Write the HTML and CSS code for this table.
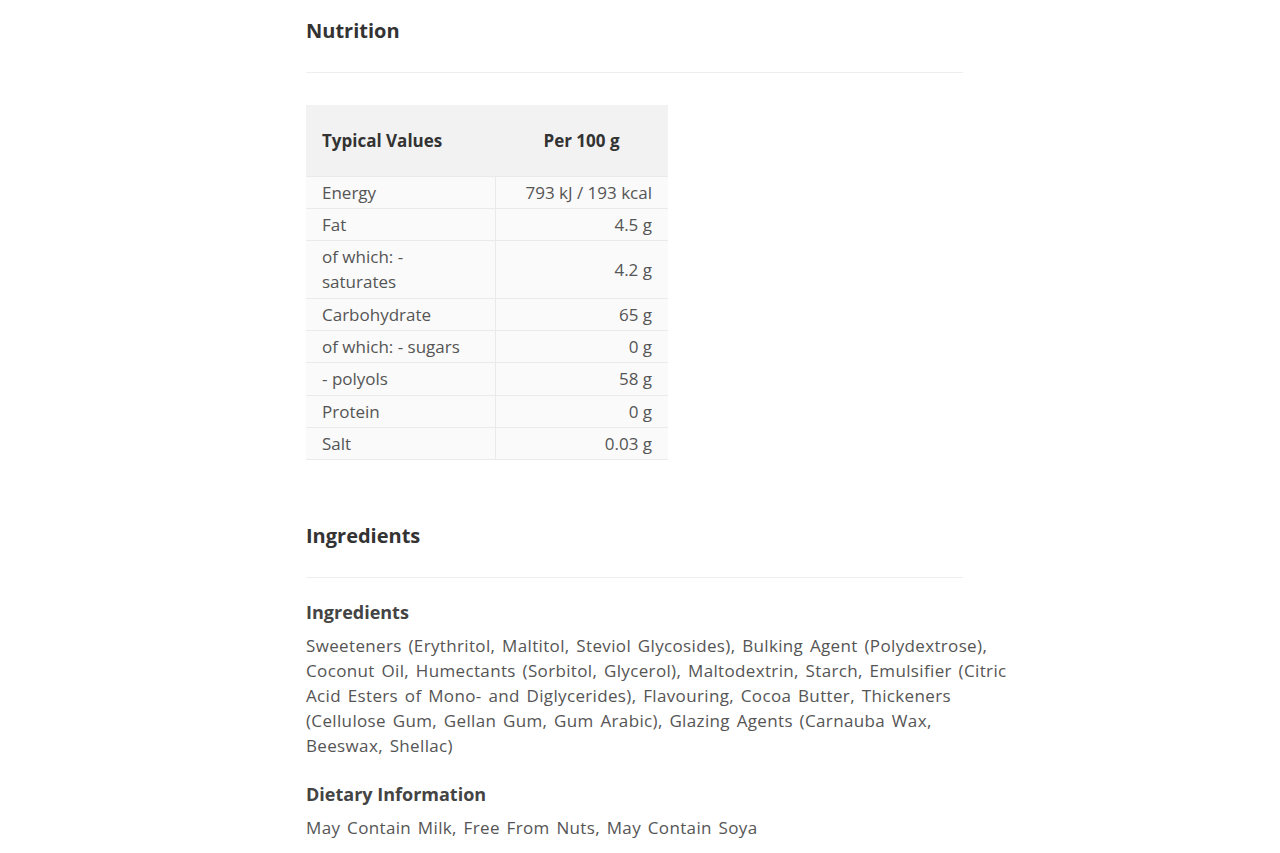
FILE: index.html
```html
<!DOCTYPE html>
<html lang="en">
<head>
<meta charset="utf-8">
<title>Nutrition</title>
<link rel="stylesheet" href="styles.css">
</head>
<body>
<main class="page">
  <section class="section">
    <h2 class="section-title">Nutrition</h2>
    <hr class="divider">
    <table class="nutri">
      <thead>
        <tr><th class="c-name">Typical Values</th><th class="c-val">Per 100 g</th></tr>
      </thead>
      <tbody>
        <tr><td>Energy</td><td class="num">793 kJ / 193 kcal</td></tr>
        <tr><td>Fat</td><td class="num">4.5 g</td></tr>
        <tr><td>of which: -<br>saturates</td><td class="num">4.2 g</td></tr>
        <tr><td>Carbohydrate</td><td class="num">65 g</td></tr>
        <tr><td>of which: - sugars</td><td class="num">0 g</td></tr>
        <tr><td>- polyols</td><td class="num">58 g</td></tr>
        <tr><td>Protein</td><td class="num">0 g</td></tr>
        <tr><td>Salt</td><td class="num">0.03 g</td></tr>
      </tbody>
    </table>
  </section>
  <section class="section section-ing">
    <h2 class="section-title">Ingredients</h2>
    <hr class="divider">
    <h3 class="sub-title">Ingredients</h3>
    <p class="text">Sweeteners (Erythritol, Maltitol, Steviol Glycosides), Bulking Agent (Polydextrose), Coconut Oil, Humectants (Sorbitol, Glycerol), Maltodextrin, Starch, Emulsifier (Citric Acid Esters of Mono- and Diglycerides), Flavouring, Cocoa Butter, Thickeners (Cellulose Gum, Gellan Gum, Gum Arabic), Glazing Agents (Carnauba Wax, Beeswax, Shellac)</p>
    <h3 class="sub-title">Dietary Information</h3>
    <p class="text">May Contain Milk, Free From Nuts, May Contain Soya</p>
  </section>
</main>
</body>
</html>
```
FILE: styles.css
```css
* { box-sizing: border-box; }
html, body { margin: 0; padding: 0; background: #fff; }
body {
  font-family: "Open Sans", "Lato", sans-serif;
  color: #555;
  font-size: 17px;
}
.page {
  margin-left: 306px;
  width: 703px;
  padding-top: 17px;
}
.section-title {
  margin: 0;
  font-size: 20px;
  font-weight: 700;
  color: #333;
  line-height: 28px;
}
.divider {
  width: 657px;
  margin: 27px 0 0 0;
  border: 0;
  border-top: 1px solid #eeeeee;
  height: 0;
}
.nutri {
  margin-top: 32px;
  border-collapse: collapse;
  width: 362px;
  background: #fafafa;
}
.nutri th {
  background: #f2f2f2;
  height: 71px;
  font-weight: 700;
  color: #333;
  padding: 0 16px;
  font-size: 17px;
  border-bottom: 1px solid #eaeaea;
}
.nutri th.c-name { text-align: left; }
.nutri th.c-val { text-align: center; }
.nutri td {
  padding: 3px 16px;
  line-height: 25.3px;
  border-bottom: 1px solid #eaeaea;
  vertical-align: middle;
}
.nutri td:first-child { width: 189px; border-right: 1px solid #eaeaea; }
.nutri td.num { text-align: right; }
.section-ing { margin-top: 62px; }
.sub-title {
  margin: 21px 0 0 0;
  font-size: 18px;
  font-weight: 700;
  color: #444;
  line-height: 26px;
}
.text + .sub-title { margin-top: 23px; }
.text {
  margin: 8px 0 0 0;
  line-height: 25px;
  letter-spacing: 0.35px;
  word-spacing: 2px;
}
```
